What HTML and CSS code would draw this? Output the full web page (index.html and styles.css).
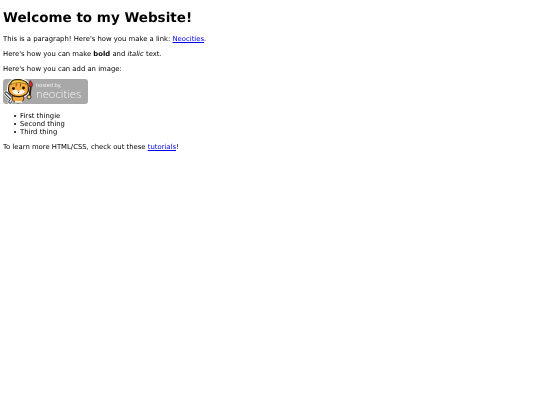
FILE: index.html
```html
<!DOCTYPE html>
<html lang="en">
<head>
<meta charset="utf-8">
<title>Welcome to my Website!</title>
<link rel="stylesheet" href="styles.css">
</head>
<body>
<h1 class="title">Welcome to my Website!</h1>
<p class="para">This is a paragraph! Here's how you make a link: <a href="#">Neocities</a>.</p>
<p class="para">Here's how you can make <strong>bold</strong> and <em>italic</em> text.</p>
<p class="para para-tight">Here's how you can add an image:</p>
<a class="badge" href="#">
<svg class="cat" viewBox="0 0 31 25" width="31" height="25" aria-hidden="true">
<path d="M6 6 L9 2 C13 -.5 19 0 23 3 L25 5 L25.5 11 C25 16 19 18 15 17.6 C10 17.5 5.5 15 5.5 10.5 Z" fill="#fff" stroke="#fff" stroke-width="3"/>
<path d="M3 14 L9 20 L7 23" stroke="#fff" stroke-width="4.6" fill="none" stroke-linecap="round"/>
<path d="M3 14 L9 20 L7 23" stroke="#222" stroke-width="3.2" fill="none" stroke-linecap="round"/>
<path d="M3 14 L9 20 L7 23" stroke="#f2f2f2" stroke-width="1.6" fill="none" stroke-linecap="round"/>
<ellipse cx="15" cy="19" rx="6.6" ry="5.6" fill="#fff"/>
<ellipse cx="15" cy="19" rx="6" ry="5" fill="#f3a83f" stroke="#2a1c0c" stroke-width="1"/>
<path d="M12 23 h7" stroke="#fff" stroke-width="1.6"/>
<path d="M26.5 18 L27.8 7" stroke="#2a1c0c" stroke-width="2" stroke-linecap="round"/>
<path d="M27 1.5 C29.5 3 30 6 28.8 8 L26.4 7.6 C26 5 26 3 27 1.5 Z" fill="#c8352b" stroke="#4a1410" stroke-width=".7"/>
<path d="M6 6 L9 2 C13 -.5 19 0 23 3 L25 5 L25.5 11 C25 16 19 18 15 17.6 C10 17.5 5.5 15 5.5 10.5 Z" fill="#f6ab3f" stroke="#2a1c0c" stroke-width="1.1"/>
<path d="M9 2.4 C13 .2 19 .6 23 3.4 L23.5 5.5 C18 3 13 3 7.5 6 Z" fill="#f2cc45" stroke="#6b4410" stroke-width=".6"/>
<path d="M9 12.5 C11 10 13.5 10.5 15.5 12.5 C17.5 10.5 20 10 22 12.5 C20.5 16.5 11 16.8 9 12.5 Z" fill="#fff6e6"/>
<circle cx="10.5" cy="9.5" r="1.4" fill="#1c1208"/>
<circle cx="20.5" cy="9" r="1.4" fill="#1c1208"/>
<path d="M14.5 12.8 H16.6 L15.5 14.2 Z" fill="#8a2b20"/>
<path d="M13 7.5 L13.5 4.5 M17.5 7.5 L17.5 4.5" stroke="#8b4a12" stroke-width="1"/>
<circle cx="26" cy="18" r="2" fill="#f8cd90" stroke="#2a1c0c" stroke-width=".8"/>
</svg>
<span class="badge-text"><span class="hosted">hosted by,</span><span class="neo">neocities</span></span>
</a>
<ul class="list">
<li class="item">First thingie</li>
<li class="item">Second thing</li>
<li class="item">Third thing</li>
</ul>
<p class="para">To learn more HTML/CSS, check out these <a href="#">tutorials</a>!</p>
</body>
</html>
```

FILE: styles.css
```css
html, body { background: #fff; }
body {
  margin: 0 3px;
  padding-top: 10px;
  font-family: "DejaVu Sans", sans-serif;
  font-size: 6.85px;
  text-rendering: geometricPrecision;
  color: #000;
  filter: blur(.22px);
}
.title {
  margin: 0 0 9px;
  font-size: 13.5px;
  font-weight: 700;
}
.para { margin: 7px 0; }
.para-tight { margin-bottom: 6px; }
.badge {
  display: flex;
  align-items: center;
  width: 85px;
  height: 25px;
  background: #a8a8a8;
  border-radius: 3px;
  overflow: hidden;
  text-decoration: none;
  color: #f4f4f4;
}
.cat { flex: none; }
.badge-text { display: flex; flex-direction: column; margin: 0 0 1px 2px; }
.hosted { font: 5.3px/7px "Open Sans", sans-serif; }
.neo { font: 300 11.3px/12px "Open Sans", sans-serif; }
.list { list-style: none; margin: 8px 0 5px; padding-left: 11px; }
.item { display: flex; align-items: center; gap: 4px; }
.item::before {
  content: "";
  width: 2px;
  height: 2px;
  border-radius: 50%;
  background: #000;
}
```
